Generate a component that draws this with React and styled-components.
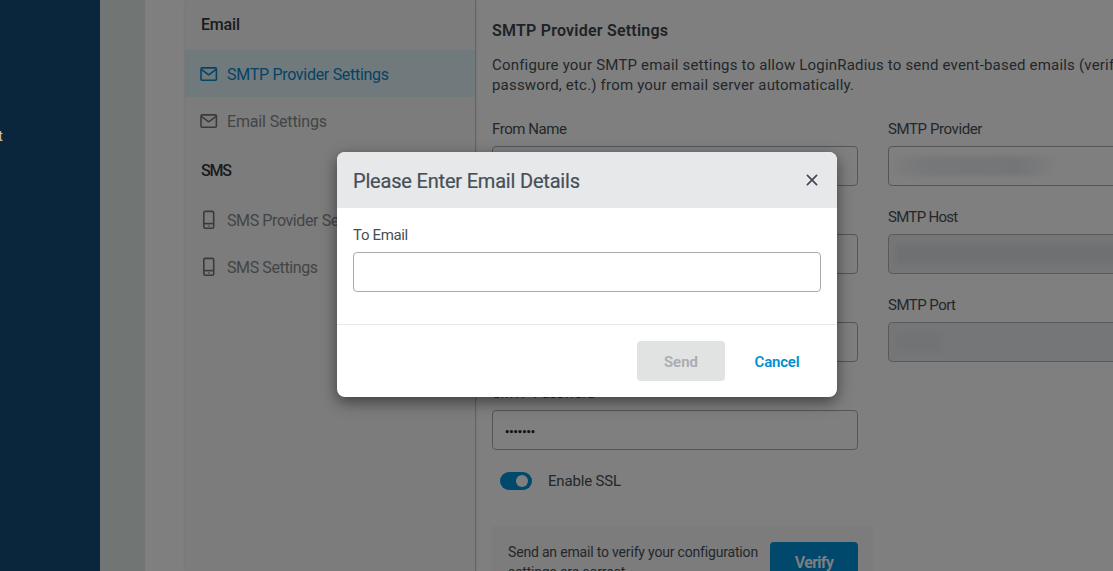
import React from "react";
import styled, { createGlobalStyle, css } from "styled-components";

const Global = createGlobalStyle`
  *, *::before, *::after { box-sizing: border-box; }
  body {
    margin: 0;
    overflow: hidden;
    background: #fff;
    color: #464f57;
    font-family: Roboto, "Liberation Sans", sans-serif;
    font-size: 15px;
    line-height: 20px;
  }
`;

const Page = styled.div`
  display: flex;
  height: 571px;
  overflow: hidden;
  white-space: nowrap;
`;

const NavRail = styled.nav`
  position: relative;
  z-index: 3;
  flex: 0 0 100px;
  padding-top: 126px;
  overflow: hidden;
  background: #0a263c;
  color: #d6c3a4;
`;

const NavLabel = styled.span`
  display: block;
  margin-left: -2px;
`;

const Gutter = styled.div`
  flex: 0 0 45px;
  background: #e2eae6;
`;

const Main = styled.main`
  flex: 1;
  min-width: 0;
  padding-left: 40px;
  display: flex;
`;

const Sidebar = styled.aside`
  flex: 0 0 291px;
  background: #f9f9f9;
  border-right: 1px solid #c6c8ca;
  border-top-left-radius: 4px;
  box-shadow: 0 0 3px rgba(0, 0, 0, 0.14);
  font-size: 16px;
`;

const SideHeading = styled.h3`
  margin: ${(p) => (p.$first ? "-3px" : "0")} 0 0;
  height: 53px;
  padding: ${(p) => (p.$first ? 18 : 17)}px 16px 0;
  font-size: 16px;
  font-weight: 500;
  letter-spacing: ${(p) => p.$track}px;
  color: #33393d;
`;

const SideItem = styled.a`
  display: flex;
  align-items: center;
  gap: 9px;
  height: 47px;
  padding: 0 15px;
  letter-spacing: ${(p) => p.$track}px;
  color: ${(p) => (p.$active ? "#0a86c8" : "#858a8d")};
  background: ${(p) => (p.$active ? "#e1f2f9" : "transparent")};
  svg {
    flex: none;
    color: ${(p) => (p.$active ? "#0a86c8" : "#70777b")};
  }
  span {
    padding-top: ${(p) => (p.$raised ? 1 : 2)}px;
  }
  padding-bottom: ${(p) => (p.$raised ? 1 : 0)}px;
`;

const Content = styled.section`
  flex: 0 0 780px;
  padding: 21px 0 0 16px;
`;

const Title = styled.h2`
  margin: 0 0 14px;
  font-size: 16px;
  font-weight: 600;
  letter-spacing: 0.218px;
  color: #3c454c;
`;

const Intro = styled.p`
  margin: 0 0 24px;
  letter-spacing: 0.19px;
`;

const Form = styled.div`
  display: grid;
  grid-template-columns: 366px 366px;
  gap: 21px 30px;
`;

const Field = styled.div`
  display: flex;
  flex-direction: column;
  gap: 7px;
`;

const Label = styled.label`
  height: 20px;
  letter-spacing: ${(p) => p.$track || 0}px;
`;

const control = css`
  width: 100%;
  height: 40px;
  border: 1px solid #a8abad;
  border-radius: 4px;
`;

const Box = styled.div`
  ${control}
  display: flex;
  align-items: center;
  padding: 0 12px;
  overflow: hidden;
  background: ${(p) => (p.$disabled ? "#e9ecef" : "#fff")};
  border-color: ${(p) => (p.$disabled ? "#b2b5b8" : "#a8abad")};
`;

const Redacted = styled.div`
  flex: none;
  width: ${(p) => p.$w}px;
  height: 20px;
  margin-left: -6px;
  background: ${(p) => p.$fill};
  filter: blur(2px);
`;

const Dots = styled.span`
  padding-top: 3px;
  font-size: 13px;
  letter-spacing: -0.1px;
  -webkit-text-stroke: 0.4px currentColor;
  color: #222;
`;

const SwitchRow = styled.div`
  display: flex;
  align-items: center;
  gap: 16px;
  margin-top: 21px;
  padding-left: 8px;
`;

const Switch = styled.span`
  display: flex;
  justify-content: flex-end;
  width: 32px;
  height: 18px;
  padding: 3px 4px;
  border-radius: 9px;
  background: #0090d8;
  &::after {
    content: "";
    width: 12px;
    height: 12px;
    border-radius: 50%;
    background: #fff;
  }
`;

const VerifyPanel = styled.div`
  display: flex;
  align-items: flex-start;
  justify-content: space-between;
  width: 381px;
  height: 90px;
  margin-top: 35px;
  padding: 16px 15px 16px 16px;
  background: #f8f8f8;
`;

const VerifyText = styled.p`
  margin: 0;
  font-size: 14px;
  letter-spacing: -0.18px;
`;

const Button = styled.button`
  width: ${(p) => p.$w || 88}px;
  height: 40px;
  padding: 1px 0 0;
  border: 0;
  border-radius: 4px;
  font: 600 ${(p) => p.$size || 15}px Roboto, sans-serif;
  letter-spacing: ${(p) => p.$track || 0}px;
  ${(p) => p.$kind === "primary" && css`background: #0090d8; color: #fff;`}
  ${(p) => p.$kind === "disabled" && css`background: #e1e3e2; color: #a9acaf;`}
  ${(p) => p.$kind === "link" && css`background: transparent; color: #008ecf;`}
`;

const Overlay = styled.div`
  position: absolute;
  inset: 0;
  z-index: 2;
  height: 571px;
  padding: 152px 0 0 337px;
  background: rgba(0, 0, 0, 0.5);
`;

const Modal = styled.div`
  width: 500px;
  height: 245px;
  overflow: hidden;
  border-radius: 8px;
  background: #fff;
  box-shadow: 0 5px 15px rgba(0, 0, 0, 0.5);
`;

const ModalHeader = styled.header`
  display: flex;
  align-items: center;
  justify-content: space-between;
  height: 56px;
  padding: 2px 19px 0 16px;
  background: #e7e8ea;
  svg { margin-bottom: 2px; }
`;

const ModalTitle = styled.h1`
  margin: 0;
  font-size: 20px;
  font-weight: 400;
  line-height: 24px;
  letter-spacing: -0.193px;
  -webkit-text-stroke: 0.2px currentColor;
  color: #464f57;
`;

const ModalBody = styled.div`
  display: flex;
  flex-direction: column;
  gap: 7px;
  height: 117px;
  padding: 17px 16px 0;
  border-bottom: 1px solid #e7e8ea;
`;

const Input = styled.input`
  ${control}
  padding: 0 12px;
  background: #fff;
  outline: none;
`;

const ModalFooter = styled.footer`
  display: flex;
  justify-content: flex-end;
  gap: 12px;
  padding: 16px 20px 0 0;
`;

const Mail = () => (
  <svg width="18" height="16" viewBox="0 0 18 16" fill="none" stroke="currentColor" strokeWidth="1.6" strokeLinejoin="round">
    <rect x="1" y="1.9" width="15.4" height="12.4" rx="1" />
    <path d="M1.3 3.4L8.7 8.8L16.1 3.4" />
  </svg>
);

const Phone = () => (
  <svg width="18" height="20" viewBox="0 0 18 20" fill="none" stroke="currentColor" strokeWidth="1.6">
    <rect x="3.8" y="1.4" width="9.9" height="16.8" rx="1.5" />
    <path d="M4 13.6H13.6" />
    <path d="M8 16H9.7" strokeWidth="1.2" />
  </svg>
);

const Close = () => (
  <svg width="12" height="12" viewBox="0 0 12 12" stroke="#3f4850" strokeWidth="1.7" strokeLinecap="round">
    <path d="M1.4 1.4L10.6 10.6M10.6 1.4L1.4 10.6" />
  </svg>
);

export default function App() {
  return (
    <>
      <Global />
      <Page>
        <NavRail><NavLabel>t</NavLabel></NavRail>
        <Gutter />
        <Main>
          <Sidebar>
            <SideHeading $first $track={-0.19}>Email</SideHeading>
            <SideItem $active $track={-0.294}><Mail /><span>SMTP Provider Settings</span></SideItem>
            <SideItem $track={-0.154}><Mail /><span>Email Settings</span></SideItem>
            <SideHeading $track={-1.2}>SMS</SideHeading>
            <SideItem $raised $track={-0.4}><Phone /><span>SMS Provider Settings</span></SideItem>
            <SideItem $raised $track={-0.396}><Phone /><span>SMS Settings</span></SideItem>
          </Sidebar>
          <Content>
            <Title>SMTP Provider Settings</Title>
            <Intro>
              Configure your SMTP email settings to allow LoginRadius to send event-based emails (verif
              <br />
              password, etc.) from your email server automatically.
            </Intro>
            <Form>
              <Field><Label $track={-0.43}>From Name</Label><Box /></Field>
              <Field>
                <Label $track={-0.4}>SMTP Provider</Label>
                <Box><Redacted $w={164} $fill="linear-gradient(90deg, #f9f9f9, #eceff1 22%, #e8ebee 75%, #fff)" /></Box>
              </Field>
              <Field><Label>From Email</Label><Box /></Field>
              <Field>
                <Label $track={-0.7}>SMTP Host</Label>
                <Box $disabled><Redacted $w={360} $fill="#dfe1e5" /></Box>
              </Field>
              <Field><Label>SMTP Username</Label><Box /></Field>
              <Field>
                <Label $track={-0.525}>SMTP Port</Label>
                <Box $disabled><Redacted $w={48} $fill="#e5e7ea" /></Box>
              </Field>
              <Field><Label $track={-0.6}>SMTP Password</Label><Box><Dots>•••••••</Dots></Box></Field>
            </Form>
            <SwitchRow><Switch /><Label $track={-0.178}>Enable SSL</Label></SwitchRow>
            <VerifyPanel>
              <VerifyText>Send an email to verify your configuration<br />settings are correct.</VerifyText>
              <Button $kind="primary" $size={16} $track={-0.6}>Verify</Button>
            </VerifyPanel>
          </Content>
        </Main>
      </Page>
      <Overlay>
        <Modal>
          <ModalHeader><ModalTitle>Please Enter Email Details</ModalTitle><Close /></ModalHeader>
          <ModalBody>
            <Label $track={-0.34}>To Email</Label>
            <Input />
          </ModalBody>
          <ModalFooter>
            <Button $kind="disabled">Send</Button>
            <Button $kind="link" $w={80} $track={-0.2}>Cancel</Button>
          </ModalFooter>
        </Modal>
      </Overlay>
    </>
  );
}
